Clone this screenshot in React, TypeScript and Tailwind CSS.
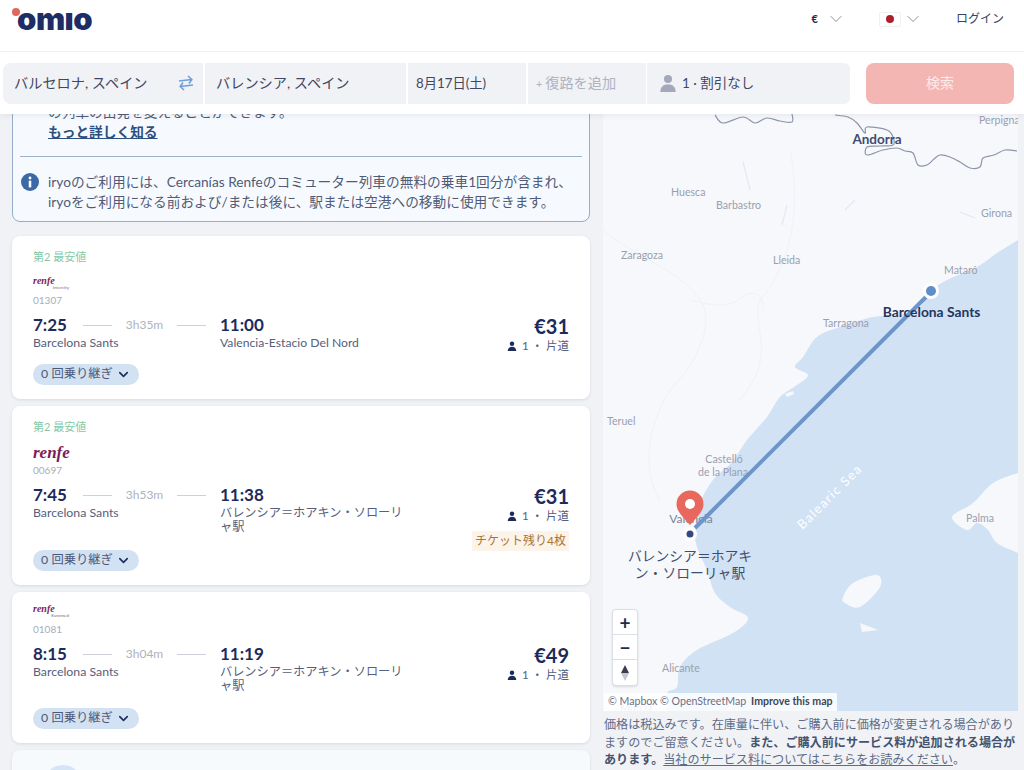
import React from "react";
import { ChevronDown } from "lucide-react";

function Seg({ w, className = "", children }: { w: string; className?: string; children: React.ReactNode }) {
  return <div className={`flex h-full items-center bg-[#f0f2f6] ${w} ${className}`}>{children}</div>;
}

function PersonSolid({ className }: { className: string }) {
  return (
    <svg viewBox="0 0 20 20" className={className} fill="currentColor">
      <circle cx="10" cy="5.5" r="4.5" />
      <path d="M1.5 20c0-5.5 3.6-8.5 8.5-8.5s8.5 3 8.5 8.5z" />
    </svg>
  );
}

function Logo({ big, sub }: { big?: boolean; sub?: string }) {
  if (big) {
    return <div className="h-[16px] font-['Liberation_Serif',serif] text-[17px] leading-[14px] font-bold italic text-[#7b1d5c]">renfe</div>;
  }
  return (
    <div className="relative h-[16px] w-[36px]">
      <div className="font-['Liberation_Serif',serif] text-[10px] leading-[10px] font-bold italic text-[#7b1d5c]">renfe</div>
      <div className="absolute top-[9px] right-0 text-[4.5px] leading-[6px] text-[#7d6a80]">{sub}</div>
    </div>
  );
}

type CardProps = {
  label?: boolean;
  big?: boolean;
  sub?: string;
  num: string;
  dep: string;
  dur: string;
  arr: string;
  dest: string;
  price: string;
  left?: boolean;
  logoBox: string;
  pad: string;
  rowH: string;
};

function Card(p: CardProps) {
  return (
    <div className={`shrink-0 rounded-lg bg-white px-[21px] pb-[14px] shadow-[0_1px_3px_rgba(60,70,100,0.14)] ${p.pad}`}>
      {p.label && <div className="mb-[7px] h-[14px] text-[11px] leading-[14px] text-[#83c9a9]">第2 最安値</div>}
      <div className={p.logoBox}>
        <Logo big={p.big} sub={p.sub} />
      </div>
      <div className="h-[12px] text-[10px] leading-[12px] text-[#a9adb8]">{p.num}</div>
      <div className={`mt-[7px] flex items-start ${p.rowH}`}>
        <div className="w-[187px]">
          <div className="flex h-[24px] items-center">
            <span className="w-[50px] text-[17px] font-bold text-[#1c2b5c]">{p.dep}</span>
            <span className="h-px w-[29px] bg-[#cdd0d8]" />
            <span className="w-[65px] text-center text-[12px] text-[#aeb2bd]">{p.dur}</span>
            <span className="h-px w-[29px] bg-[#cdd0d8]" />
          </div>
          <div className="mt-[-1px] text-[12.3px] leading-[14px] text-[#56607c]">Barcelona Sants</div>
        </div>
        <div className="w-[184px]">
          <div className="flex h-[24px] items-center text-[17px] font-bold text-[#1c2b5c]">{p.arr}</div>
          <div className="mt-[-1px] text-[12.2px] leading-[14px] text-[#56607c]">{p.dest}</div>
        </div>
        <div className="flex flex-1 flex-col items-end">
          <div className="h-[26px] text-[20px] leading-[26px] font-bold text-[#1c2b5c]">{p.price}</div>
          <div className="flex h-[14px] items-center gap-[5px] text-[11.5px] leading-[14px] text-[#56607c]">
            <PersonSolid className="size-[10px] text-[#1c2b5c]" />
            <span>1 ・ 片道</span>
          </div>
          {p.left && (
            <div className="mt-[8px] flex h-[20px] items-center bg-[#fdf4e9] px-[3px] text-[12px] text-[#a9743b]">チケット残り4枚</div>
          )}
        </div>
      </div>
      <div className="flex h-[21px] w-[106px] items-center justify-center gap-[3px] rounded-full bg-[#d2e2f3] text-[12.3px] text-[#4c5878]">
        <span>0 回乗り継ぎ</span>
        <ChevronDown className="size-[15px] text-[#1c2b5c]" strokeWidth={2.5} />
      </div>
    </div>
  );
}

const small = "fill-[#9a9fb0] text-[10.6px]";

type P = [number, number];

function smooth(pts: P[], closed = false): string {
  const n = pts.length;
  const at = (i: number): P => (closed ? pts[(i + n) % n] : pts[Math.max(0, Math.min(n - 1, i))]);
  let d = `M${pts[0][0]} ${pts[0][1]}`;
  const end = closed ? n : n - 1;
  for (let i = 0; i < end; i++) {
    const [p0, p1, p2, p3] = [at(i - 1), at(i), at(i + 1), at(i + 2)];
    const c1x = p1[0] + (p2[0] - p0[0]) / 6;
    const c1y = p1[1] + (p2[1] - p0[1]) / 6;
    const c2x = p2[0] - (p3[0] - p1[0]) / 6;
    const c2y = p2[1] - (p3[1] - p1[1]) / 6;
    d += ` C${c1x.toFixed(1)} ${c1y.toFixed(1)} ${c2x.toFixed(1)} ${c2y.toFixed(1)} ${p2[0]} ${p2[1]}`;
  }
  return closed ? d + " Z" : d;
}

const coast: P[] = [
  [1018, 240], [997, 253], [977, 267], [947, 280], [931, 291], [920, 307], [900, 315], [873, 317], [840, 327],
  [817, 337], [803, 357], [795, 367], [808, 375], [797, 385], [780, 397], [767, 417], [747, 440], [732, 462],
  [713, 480], [700, 503], [695, 530], [697, 547], [707, 570], [715, 593], [730, 607], [748, 618], [733, 633],
  [697, 650], [680, 667], [677, 687], [667, 693], [667, 711],
];
const mallorca: P[] = [[1018, 473], [993, 483], [973, 503], [952, 517], [967, 530], [977, 523], [988, 530], [997, 543], [1018, 553]];
const ibiza: P[] = [[843, 597], [853, 583], [877, 575], [880, 587], [860, 607], [845, 603]];
const border1: P[] = [[715, 115], [723, 123], [743, 117], [755, 123], [767, 118], [780, 121], [792, 122], [792, 114]];
const border2: P[] = [
  [835, 115], [848, 117], [857, 123], [865, 133], [867, 127], [887, 130], [893, 137], [893, 145], [880, 146], [867, 147], [867, 155], [883, 150],
  [897, 148], [905, 151], [913, 153], [918, 165], [927, 165], [934, 159], [940, 155], [950, 157], [960, 162], [970, 168], [980, 167], [983, 158], [994, 155], [1005, 150], [1017, 151],
];

function MapArt() {
  return (
    <svg viewBox="603 114 415 597" className="h-full w-full">
      <rect x="603" y="114" width="415" height="597" fill="#f6f8fb" />
      <g fill="none" stroke="#eff2f6" strokeWidth="1">
        <path d="M603 230 C640 260 680 270 700 300 C715 320 700 360 670 390 C650 420 640 470 660 500" />
        <path d="M790 150 C800 200 795 260 760 300 C750 330 780 350 740 400" />
        <path d="M690 300 C710 305 730 310 745 295 C760 290 765 300 762 312" />
      </g>
      <g fill="none" stroke="#e1e9f2" strokeWidth="1.2">
        <path d="M743 162 L750 190 M787 205 L782 225 M845 210 L855 200 M960 212 L975 218" />
      </g>
      <path d={`${smooth(coast)} L1018 711 Z`} fill="#d1e2f4" />
      <path d={smooth(mallorca)} fill="#f6f8fb" />
      <path d={smooth(ibiza, true)} fill="#f6f8fb" />
      <path d="M860 623 L878 630 L862 632 Z" fill="#f6f8fb" />
      <path d="M785 394 L793 391 L794 394 L787 397 Z" fill="#f6f8fb" />
      <g fill="none" stroke="#8d96ab" strokeWidth="1.2" strokeLinejoin="round">
        <path d={smooth(border1)} />
        <path d={smooth(border2)} />
      </g>

      <text x="979" y="124" className={small}>Perpignan</text>
      <text x="877" y="144" textAnchor="middle" className="fill-[#3f4c70] text-[13.5px] font-bold">Andorra</text>
      <text x="671" y="196" className={small}>Huesca</text>
      <text x="716" y="209" className={small}>Barbastro</text>
      <text x="981" y="217" className={small}>Girona</text>
      <text x="621" y="259" className={small}>Zaragoza</text>
      <text x="773" y="264" className={small}>Lleida</text>
      <text x="944" y="274" className={small}>Mataró</text>
      <text x="823" y="327" className={small}>Tarragona</text>
      <text x="607" y="425" className={small}>Teruel</text>
      <text x="724" y="463" textAnchor="middle" className={small}>Castelló</text>
      <text x="723" y="476" textAnchor="middle" className={small}>de la Plana</text>
      <text x="966" y="522" className={small}>Palma</text>
      <text x="662" y="672" className={small}>Alicante</text>
      <text x="691" y="523" textAnchor="middle" className="fill-[#7d8499] text-[12px]">Valencia</text>
      <text x="830" y="501" textAnchor="middle" transform="rotate(-45 830 497)" className="fill-white text-[13px] tracking-[1.4px]">Balearic Sea</text>
      <text x="620" y="712" className={small}>Murcia</text>

      <line x1="695" y1="528" x2="926" y2="297" stroke="#6d95ca" strokeWidth="4" />
      <circle cx="931" cy="291" r="8" fill="#ffffff" />
      <circle cx="931" cy="291" r="5" fill="#5f8fcb" />
      <text x="931.5" y="317" textAnchor="middle" className="fill-[#26365f] text-[13.8px] font-bold">Barcelona Sants</text>
      <circle cx="690" cy="534" r="7" fill="#ffffff" />
      <circle cx="690" cy="534" r="3.5" fill="#34497f" />
      <text x="690" y="561" textAnchor="middle" className="fill-[#414d6e] text-[13.8px]">バレンシア＝ホアキ</text>
      <text x="690" y="578" textAnchor="middle" className="fill-[#414d6e] text-[13.8px]">ン・ソローリャ駅</text>
      <path d="M690 525 C682 516 676.5 511 676.5 504 A13.5 13.5 0 0 1 703.5 504 C703.5 511 698 516 690 525 Z" fill="#e8685d" />
      <circle cx="690" cy="504" r="5" fill="#ffffff" />
    </svg>
  );
}

export default function App() {
  return (
    <div className="flex h-[770px] flex-col overflow-hidden bg-[#f0f2f6] font-['Lato','Noto_Sans_CJK_JP',sans-serif]">
      <header className="flex h-[52px] items-start justify-between border-b border-[#f3f4f7] bg-white pr-[20px] pl-[12px]">
        <div className="relative h-[36px] w-[90px]">
          <div className="absolute top-[8px] left-0 size-[8px] rounded-full bg-[#e0695f]" />
          <div className="absolute top-[-3px] left-[5px] font-['Inter',sans-serif] text-[31px] leading-[44px] font-black tracking-[-0.5px] text-[#1e2d66]">omıo</div>
        </div>
        <div className="mt-[9px] flex h-[20px] items-center text-[12px] text-[#3a4260]">
          <span className="text-[11px] font-bold text-[#1e2d5c]">€</span>
          <ChevronDown className="ml-[8px] size-[20px] text-[#737a90]" strokeWidth={1} />
          <div className="ml-[34px] flex h-[13px] w-[20px] items-center justify-center bg-white shadow-[0_0_1px_rgba(0,0,0,0.35)]">
            <div className="size-[8px] rounded-full bg-[#ad1f2a]" />
          </div>
          <ChevronDown className="ml-[3px] size-[20px] text-[#737a90]" strokeWidth={1} />
          <span className="ml-[33px]">ログイン</span>
        </div>
      </header>

      <div className="relative z-10 flex h-[62px] items-center gap-[15px] bg-white pr-[10px] pl-[3px] shadow-[0_2px_6px_rgba(60,70,100,0.08)]">
        <div className="flex h-[41px] w-[848px] gap-[2px] overflow-hidden rounded-lg text-[14.2px] leading-[38px] text-[#3f4762]">
          <Seg w="w-[200px]" className="justify-between pr-[9px] pl-[11px]">
            <span>バルセロナ, スペイン</span>
            <svg viewBox="0 0 16 16" className="size-[16px] text-[#6f9fd6]" fill="none" stroke="currentColor" strokeWidth="1.6">
              <path d="M1 6l12.5-1.5M10 1l3.8 3.5L11 8.5M15 10l-12.5 1.5M6 15l-3.8-3.5L5 7.5" />
            </svg>
          </Seg>
          <Seg w="w-[201px]" className="pl-[11px]"><span>バレンシア, スペイン</span></Seg>
          <Seg w="w-[118px]" className="pl-[8px]"><span className="text-[13.3px]">8月17日(土)</span></Seg>
          <Seg w="w-[118px]" className="pl-[8px] text-[#aeb3c2]"><span><span className="text-[11px]">+ </span>復路を追加</span></Seg>
          <Seg w="w-[203px]" className="ml-[-1px] gap-[5px] pl-[12px]">
            <PersonSolid className="size-[18px] text-[#a3a9bb]" />
            <span className="text-[13.5px]">1 · 割引なし</span>
          </Seg>
        </div>
        <div className="flex h-[41px] w-[148px] items-center justify-center rounded-lg bg-[#f4b6b3] text-[14px] leading-[38px] text-[#fcebe9]">検索</div>
      </div>

      <div className="flex min-h-0 flex-1">
        <div className="flex w-[603px] shrink-0 flex-col gap-[7px] overflow-hidden pr-[13px] pl-[12px]">
          <div className="mt-[-13px] mb-[7px] shrink-0 rounded-b-lg border border-[#93aeca] bg-[#f6fafe] px-[8px] pb-[9px] text-[13.7px] text-[#4f5b77]">
            <div className="pl-[27px] leading-[20px]">
              <div>の列車の出発を変えることができます。</div>
              <div className="font-bold text-[#2d4f80] underline">もっと詳しく知る</div>
            </div>
            <div className="mx-[-1px] mt-[14px] h-px bg-[#9db3c9]" />
            <div className="mt-[15px] flex gap-[9px] leading-[20px]">
              <svg viewBox="0 0 20 20" className="mt-[1px] size-[18px] shrink-0">
                <circle cx="10" cy="10" r="10" fill="#3a69a6" />
                <circle cx="10" cy="5.5" r="1.6" fill="#fff" />
                <rect x="8.6" y="8.5" width="2.8" height="7.5" fill="#fff" />
              </svg>
              <div className="whitespace-nowrap">
                <div>iryoのご利用には、Cercanías Renfeのコミューター列車の無料の乗車1回分が含まれ、</div>
                <div>iryoをご利用になる前および/または後に、駅または空港への移動に使用できます。</div>
              </div>
            </div>
          </div>
          <Card label sub="intercity" num="01307" dep="7:25" dur="3h35m" arr="11:00" dest="Valencia-Estacio Del Nord" price="€31" logoBox="h-[23px] pt-[5px]" pad="pt-[14px]" rowH="h-[51px]" />
          <Card label big num="00697" dep="7:45" dur="3h53m" arr="11:38" dest="バレンシア＝ホアキン・ソローリャ駅" price="€31" left logoBox="h-[23px] pt-[5px]" pad="pt-[14px]" rowH="h-[67px]" />
          <Card sub="Euromed" num="01081" dep="8:15" dur="3h04m" arr="11:19" dest="バレンシア＝ホアキン・ソローリャ駅" price="€49" logoBox="h-[19px]" pad="pt-[12px]" rowH="h-[66px]" />
          <div className="h-[60px] shrink-0 rounded-lg bg-[#f7fafd] pt-[15px] pl-[31px] shadow-[0_1px_3px_rgba(60,70,100,0.14)]">
            <div className="size-[40px] rounded-full bg-[#d5e5f5]" />
          </div>
        </div>

        <div className="flex w-[415px] shrink-0 flex-col">
          <div className="relative h-[597px] shrink-0 overflow-hidden">
            <MapArt />
            <div className="absolute top-[495px] left-[9px] flex w-[26px] flex-col divide-y divide-[#dcdfe5] rounded-[4px] border border-[#dcdfe5] bg-white text-[#1f2b4d] shadow-sm">
              <div className="flex h-[25px] items-center justify-center text-[19px] leading-none font-bold">+</div>
              <div className="flex h-[25px] items-center justify-center text-[19px] leading-none font-bold">−</div>
              <div className="flex h-[25px] flex-col items-center justify-center">
                <svg viewBox="0 0 10 18" className="h-[18px] w-[10px]">
                  <path d="M5 1L9 9H1z" fill="#3a3f4f" />
                  <path d="M5 17L9 9H1z" fill="#c4c6cc" />
                </svg>
              </div>
            </div>
            <div className="absolute bottom-0 left-[1px] flex h-[18px] items-center gap-[5px] bg-white/85 px-[4px] text-[10.6px] text-[#6a7086]">
              <span>© Mapbox © OpenStreetMap</span>
              <span className="font-bold text-[#3f4559]">Improve this map</span>
            </div>
          </div>
          <div className="pt-[5px] pl-[1px] text-[12.1px] leading-[17.6px] text-[#5d6b86]">
            価格は税込みです。在庫量に伴い、ご購入前に価格が変更される場合があり
            ますのでご留意ください。<span className="font-bold text-[#46536f]">また、ご購入前にサービス料が追加される場合があります。</span><span className="underline">当社のサービス料についてはこちらをお読みください</span>。
          </div>
        </div>
      </div>
    </div>
  );
}
